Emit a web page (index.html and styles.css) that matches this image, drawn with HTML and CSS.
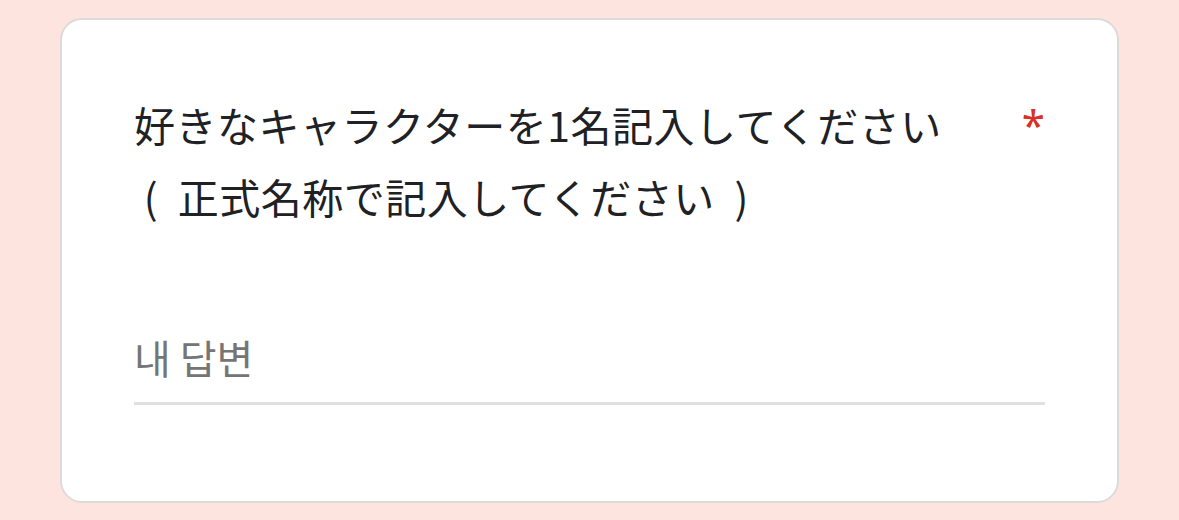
FILE: index.html
```html
<!DOCTYPE html>
<html lang="ja">
<head>
<meta charset="utf-8">
<link rel="stylesheet" href="styles.css">
</head>
<body>
<div class="page">
  <div class="card">
    <div class="title-row">
      <div class="title">好きなキャラクターを1名記入してください
 <span class="note">( 正式名称で記入してください )</span></div>
      <span class="req">*</span>
    </div>
    <div class="answer">
      <span class="placeholder">내 답변</span>
    </div>
  </div>
</div>
</body>
</html>
```
FILE: styles.css
```css
html, body {
  margin: 0;
  padding: 0;
  background: #fde4de;
}
.page {
  width: 1179px;
  height: 520px;
  box-sizing: border-box;
  padding: 18px 60px 17px 60px;
}
.card {
  box-sizing: border-box;
  width: 1059px;
  height: 485px;
  background: #fff;
  border: 2px solid #dcdadb;
  border-radius: 22px;
  padding: 68px 72px 0 72px;
}
.title-row {
  display: flex;
  justify-content: space-between;
  align-items: flex-start;
}
.title {
  font-family: "Noto Sans CJK JP", "Noto Sans", sans-serif;
  font-size: 41px;
  line-height: 72px;
  color: #202124;
  letter-spacing: 0.5px;
  white-space: pre-wrap;
}
.note {
  word-spacing: 10px;
}
.req {
  font-family: "Noto Sans", sans-serif;
  font-size: 42px;
  line-height: 72px;
  margin-top: 1px;
  color: #d93025;
}
.answer {
  margin-top: 101px;
  border-bottom: 3px solid #e0e0e0;
  height: 69px;
}
.placeholder {
  font-family: "Noto Sans CJK KR", sans-serif;
  font-size: 40px;
  line-height: 48px;
  color: #757575;
}
```
